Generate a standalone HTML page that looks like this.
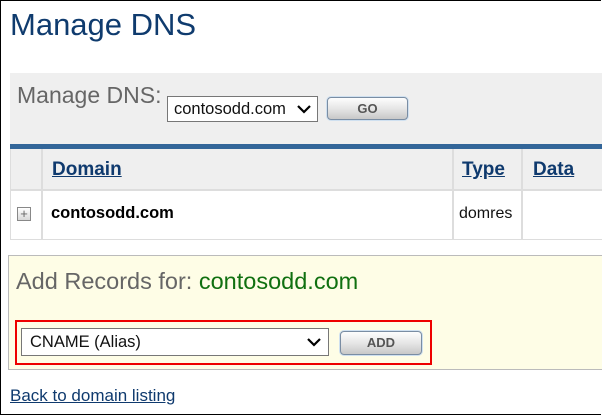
<!DOCTYPE html>
<html><head><style>
body{margin:0;width:602px;height:415px;position:relative;overflow:hidden;background:#fff;font-family:"Liberation Sans",Arial,sans-serif}
.frame{position:absolute;left:0;top:0;width:600px;height:413px;border:1px solid #000;border-right:none}
.a{position:absolute}
.btn{position:absolute;border:1px solid #7a8da3;border-radius:4px;background:linear-gradient(#fdfdfd,#e6e6e6 50%,#c8c8c8);box-shadow:0 0 0 1px #cfe0f0;font:bold 13px "Liberation Sans Narrow","Liberation Sans",sans-serif;color:#555;text-align:center;box-sizing:border-box}
.sel{position:absolute;border:1px solid #777;background:#fff;box-sizing:border-box;color:#111}
.sel svg{position:absolute}
.lnk{color:#0f3a6e;text-decoration:underline}
</style></head><body>
<div class="frame"></div>
<div class="a" style="left:10px;top:7px;font-size:31px;color:#0f3b6e">Manage DNS</div>
<div class="a" style="left:10px;top:73px;width:592px;height:71px;background:#efefef"></div>
<div class="a" style="left:17px;top:82px;font-size:23px;color:#666">Manage DNS:</div>
<div class="sel" style="left:167px;top:96px;width:151px;height:26px;font-size:16.5px;padding:3px 0 0 6px">contosodd.com<svg style="right:6px;top:8px" width="14" height="9" viewBox="0 0 14 9"><path d="M1 1 L7 7 L13 1" stroke="#000" stroke-width="2.2" fill="none"/></svg></div>
<div class="btn" style="left:327px;top:97px;width:81px;height:23px;line-height:21px">GO</div>
<div class="a" style="left:10px;top:144px;width:592px;height:5px;background:#336699"></div>
<div class="a" style="left:10px;top:149px;width:592px;height:41px;background:#efefef"></div>
<div class="a" style="left:10px;top:149px;width:592px;height:91px;border:1px solid #ddd;border-top:none;border-right:none;box-sizing:border-box"></div>
<div class="a" style="left:10px;top:189px;width:592px;height:2px;background:#ddd"></div>
<div class="a" style="left:41px;top:149px;width:2px;height:91px;background:#ddd"></div>
<div class="a" style="left:452px;top:149px;width:2px;height:91px;background:#ddd"></div>
<div class="a" style="left:521px;top:149px;width:2px;height:91px;background:#ddd"></div>
<div class="a lnk" style="left:52px;top:159px;font-size:19px;font-weight:bold">Domain</div>
<div class="a lnk" style="left:462px;top:159px;font-size:19px;font-weight:bold">Type</div>
<div class="a lnk" style="left:533px;top:159px;font-size:19px;font-weight:bold">Data</div>
<div class="a" style="left:17px;top:207px;width:12px;height:12px;border:1px solid #888;background:linear-gradient(#fff,#d8d8d8);font-size:13px;line-height:12px;text-align:center;color:#666">+</div>
<div class="a" style="left:51px;top:204px;font-size:16.5px;font-weight:bold;color:#000">contosodd.com</div>
<div class="a" style="left:459px;top:205px;font-size:16px;color:#111">domres</div>
<div class="a" style="left:8px;top:255px;width:594px;height:115px;background:#fefde6;border:1px solid #bbb;border-right:none;box-sizing:border-box"></div>
<div class="a" style="left:16px;top:268px;font-size:23.5px;color:#666">Add Records for: <span style="color:#107010">contosodd.com</span></div>
<div class="a" style="left:15px;top:320px;width:417px;height:45px;border:2px solid #e00;box-sizing:border-box"></div>
<div class="sel" style="left:21px;top:328px;width:308px;height:28px;font-size:16.5px;padding:4px 0 0 8px">CNAME (Alias)<svg style="right:7px;top:9px" width="14" height="9" viewBox="0 0 14 9"><path d="M1 1 L7 7 L13 1" stroke="#000" stroke-width="2.2" fill="none"/></svg></div>
<div class="btn" style="left:340px;top:331px;width:82px;height:24px;line-height:22px">ADD</div>
<div class="a lnk" style="left:10px;top:386px;font-size:17px">Back to domain listing</div>
</body></html>
